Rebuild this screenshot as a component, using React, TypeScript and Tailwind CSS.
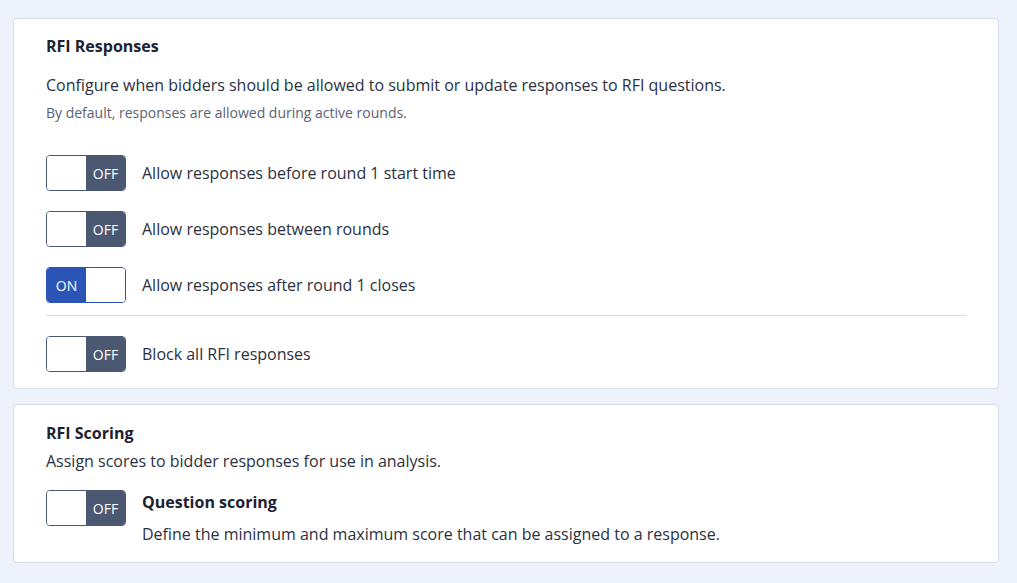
import React, { useState } from "react";

const font = { fontFamily: '"Open Sans", "Noto Sans", sans-serif' };

function Toggle({ on, onChange }: { on: boolean; onChange: () => void }) {
  return (
    <button
      type="button"
      onClick={onChange}
      className={
        "flex h-[36px] w-[80px] shrink-0 overflow-hidden rounded-[4px] border text-[14px] font-medium text-white " +
        (on ? "border-[#2a55b7]" : "border-[#4b5872]")
      }
    >
      {on ? (
        <>
          <span className="flex h-full w-[39px] items-center justify-center bg-[#2a55b7]">ON</span>
          <span className="h-full flex-1 bg-white" />
        </>
      ) : (
        <>
          <span className="h-full w-[39px] bg-white" />
          <span className="flex h-full flex-1 items-center justify-center bg-[#4b5872]">OFF</span>
        </>
      )}
    </button>
  );
}

function Row({ label, on, onChange }: { label: string; on: boolean; onChange: () => void }) {
  return (
    <div className="flex items-center gap-4">
      <Toggle on={on} onChange={onChange} />
      <span className="text-[16px] text-[#2b3140]">{label}</span>
    </div>
  );
}

export default function App() {
  const [vals, setVals] = useState({ before: false, between: false, after: true, block: false, scoring: false });
  const flip = (k: keyof typeof vals) => setVals((v) => ({ ...v, [k]: !v[k] }));

  return (
    <div className="min-h-[583px] bg-[#eef2fb] px-[13px] pt-[18px] pb-4" style={font}>
      <div className="w-[986px] rounded-[4px] border border-[#d5dbe8] bg-white px-[32px] pt-[17px] pb-[16px]">
        <h2 className="text-[16px] font-bold leading-[20px] text-[#1c2230]">RFI Responses</h2>
        <p className="mt-[17px] text-[16px] leading-[24px] text-[#2b3140]">
          Configure when bidders should be allowed to submit or update responses to RFI questions.
        </p>
        <p className="mt-[6px] text-[14px] leading-[20px] text-[#5a6272]">
          By default, responses are allowed during active rounds.
        </p>
        <div className="mt-[32px] flex flex-col gap-[20px]">
          <Row label="Allow responses before round 1 start time" on={vals.before} onChange={() => flip("before")} />
          <Row label="Allow responses between rounds" on={vals.between} onChange={() => flip("between")} />
          <Row label="Allow responses after round 1 closes" on={vals.after} onChange={() => flip("after")} />
        </div>
        <div className="mt-[12px] mb-[20px] h-px bg-[#d5dbe8]" />
        <Row label="Block all RFI responses" on={vals.block} onChange={() => flip("block")} />
      </div>

      <div className="mt-[15px] w-[986px] rounded-[4px] border border-[#d5dbe8] bg-white px-[32px] pt-[18px] pb-[16px]">
        <h2 className="text-[16px] font-bold leading-[20px] text-[#1c2230]">RFI Scoring</h2>
        <p className="mt-[6px] text-[16px] leading-[24px] text-[#2b3140]">
          Assign scores to bidder responses for use in analysis.
        </p>
        <div className="mt-[17px] flex items-start gap-4">
          <Toggle on={vals.scoring} onChange={() => flip("scoring")} />
          <div>
            <div className="text-[16px] font-bold leading-[24px] text-[#1c2230]">Question scoring</div>
            <div className="mt-[8px] text-[16px] leading-[24px] text-[#2b3140]">
              Define the minimum and maximum score that can be assigned to a response.
            </div>
          </div>
        </div>
      </div>
    </div>
  );
}
